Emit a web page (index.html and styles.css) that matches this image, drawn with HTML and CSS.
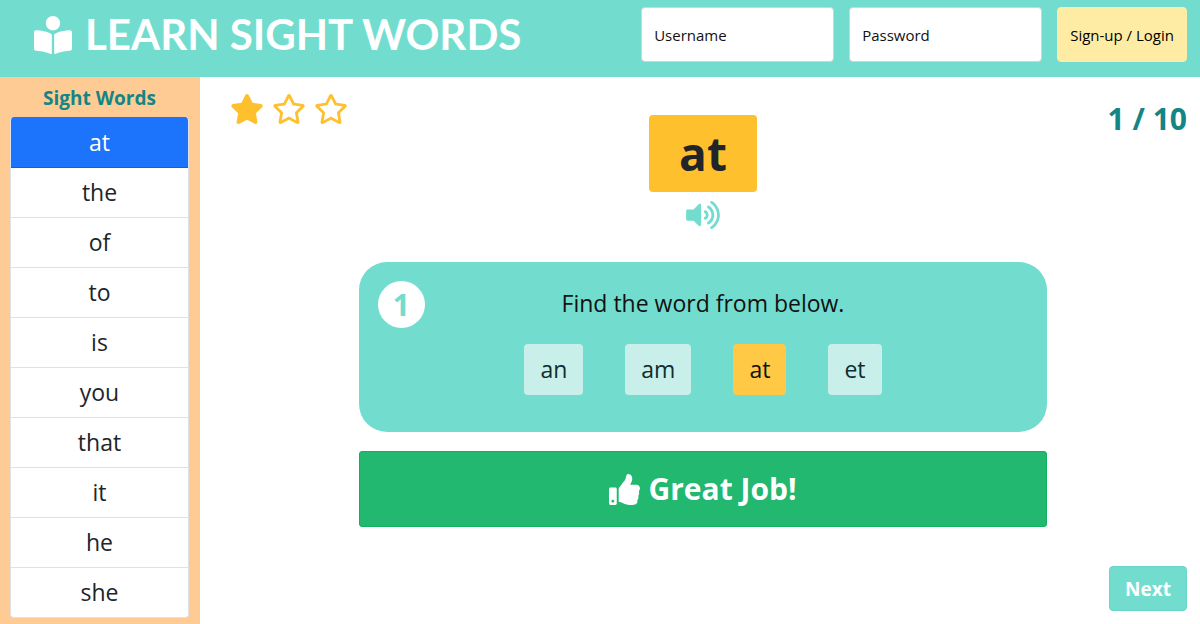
FILE: index.html
```html
<!DOCTYPE html>
<html lang="en">
<head>
<meta charset="utf-8">
<meta name="viewport" content="width=device-width, initial-scale=1">
<title>Learn Sight Words</title>
<link rel="stylesheet" href="styles.css">
</head>
<body class="page">
<svg class="sprite" aria-hidden="true">
  <symbol id="star-outline" viewBox="0 0 576 512"><path d="M528.1 171.5L382 150.2 316.7 17.8c-11.7-23.6-45.6-23.9-57.4 0L194 150.2 47.9 171.5c-26.2 3.8-36.7 36.1-17.7 54.6l105.7 103-25 145.5c-4.5 26.3 23.2 46 46.4 33.7L288 439.6l130.7 68.7c23.2 12.2 50.9-7.4 46.4-33.7l-25-145.5 105.7-103c19-18.5 8.5-50.8-17.7-54.6zM388.6 312.3l23.7 138.4L288 385.4l-124.3 65.3 23.7-138.4-100.6-98 139-20.2 62.2-126 62.2 126 139 20.2-100.6 98z"/></symbol>
  <symbol id="star-solid" viewBox="0 0 576 512"><path d="M259.3 17.8L194 150.2 47.9 171.5c-26.2 3.8-36.7 36.1-17.7 54.6l105.7 103-25 145.5c-4.5 26.3 23.2 46 46.4 33.7L288 439.6l130.7 68.7c23.2 12.2 50.9-7.4 46.4-33.7l-25-145.5 105.7-103c19-18.5 8.5-50.8-17.7-54.6L382 150.2 316.7 17.8c-11.7-23.6-45.6-23.9-57.4 0z"/></symbol>
</svg>
<header class="topbar">
  <h1 class="brand">
    <svg class="brand-icon" viewBox="0 0 512 512" aria-hidden="true"><path d="M352 96c0-53.02-42.98-96-96-96s-96 42.98-96 96 42.98 96 96 96 96-42.98 96-96zM233.59 241.1c-59.33-36.32-155.43-46.3-203.79-49.05C13.55 191.13 0 203.51 0 219.14v222.8c0 14.33 11.59 26.28 26.49 27.05 43.66 2.29 131.99 10.68 193.04 41.43 9.37 4.72 20.48-1.71 20.48-11.87V252.56c-.01-4.67-2.32-8.95-6.42-11.46zm248.61-49.05c-48.35 2.74-144.46 12.73-203.78 49.05-4.1 2.51-6.41 6.96-6.41 11.63v245.79c0 10.19 11.14 16.63 20.54 11.9 61.04-30.72 149.32-39.11 192.97-41.4 14.9-.78 26.49-12.73 26.49-27.06V219.14c-.01-15.63-13.56-28.01-29.81-27.09z"/></svg>
    <span>LEARN SIGHT WORDS</span>
  </h1>
  <form class="login">
    <input class="field" type="text" placeholder="Username" aria-label="Username">
    <input class="field" type="password" placeholder="Password" aria-label="Password">
    <button class="login-button" type="button">Sign-up / Login</button>
  </form>
</header>
<div class="layout">
  <nav class="sidebar" aria-labelledby="words-title">
    <h2 class="sidebar-title" id="words-title">Sight Words</h2>
    <div class="words">
      <a class="word active" href="#at">at</a>
      <a class="word" href="#the">the</a>
      <a class="word" href="#of">of</a>
      <a class="word" href="#to">to</a>
      <a class="word" href="#is">is</a>
      <a class="word" href="#you">you</a>
      <a class="word" href="#that">that</a>
      <a class="word" href="#it">it</a>
      <a class="word" href="#he">he</a>
      <a class="word" href="#she">she</a>
    </div>
  </nav>
  <main class="stage">
    <div class="stars" role="img" aria-label="1 of 3 stars">
      <svg class="star"><use href="#star-solid"/></svg>
      <svg class="star"><use href="#star-outline"/></svg>
      <svg class="star"><use href="#star-outline"/></svg>
    </div>
    <div class="lesson">
      <div class="current-word">at</div>
      <button class="listen" type="button" aria-label="Listen">
        <svg class="listen-icon" viewBox="0 0 576 512" aria-hidden="true"><path d="M215.03 71.05L126.06 160H24c-13.26 0-24 10.74-24 24v144c0 13.25 10.74 24 24 24h102.06l88.97 88.95c15.03 15.03 40.97 4.47 40.97-16.97V88.02c0-21.46-25.96-31.98-40.97-16.97zm233.32-51.08c-11.17-7.33-26.18-4.24-33.51 6.95-7.34 11.17-4.22 26.18 6.95 33.51 66.27 43.49 105.82 116.6 105.82 195.58 0 78.98-39.55 152.09-105.82 195.58-11.17 7.32-14.29 22.34-6.95 33.5 7.04 10.71 21.93 14.56 33.51 6.95C528.27 439.58 576 351.33 576 256S528.27 72.43 448.35 19.97zM480 256c0-63.53-32.06-121.94-85.77-156.24-11.19-7.14-26.03-3.82-33.12 7.46s-3.78 26.21 7.41 33.36C408.27 165.97 432 209.6 432 256s-23.73 90.02-63.48 115.42c-11.19 7.14-14.5 22.07-7.41 33.36 6.51 10.36 21.12 15.14 33.12 7.46C447.94 377.94 480 319.54 480 256zm-141.77-76.87c-11.58-6.33-26.19-2.16-32.61 9.45-6.39 11.61-2.16 26.2 9.45 32.61C327.98 228.28 336 241.63 336 256c0 14.38-8.02 27.72-20.92 34.81-11.61 6.41-15.84 21-9.45 32.61 6.43 11.66 21.05 15.8 32.61 9.45 28.23-15.55 45.77-45 45.77-76.88s-17.54-61.32-45.78-76.86z"/></svg>
      </button>
      <section class="question">
        <span class="step">1</span>
        <p class="prompt">Find the word from below.</p>
        <div class="options">
          <button class="option" type="button">an</button>
          <button class="option" type="button">am</button>
          <button class="option chosen" type="button">at</button>
          <button class="option" type="button">et</button>
        </div>
      </section>
      <div class="result" role="status">
        <svg class="result-icon" viewBox="0 0 512 512" aria-hidden="true"><path d="M104 224H24c-13.255 0-24 10.745-24 24v240c0 13.255 10.745 24 24 24h80c13.255 0 24-10.745 24-24V248c0-13.255-10.745-24-24-24zM64 472c-13.255 0-24-10.745-24-24s10.745-24 24-24 24 10.745 24 24-10.745 24-24 24zM384 81.452c0 42.416-25.97 66.208-33.277 94.548h101.723c33.397 0 59.397 27.746 59.553 58.098.084 17.938-7.546 37.249-19.439 49.197l-.11.11c9.836 23.337 8.237 56.037-9.308 79.469 8.681 25.895-.069 57.704-16.382 74.757 4.298 17.598 2.244 32.575-6.148 44.632C440.202 511.587 389.616 512 346.839 512l-2.845-.001c-48.287-.017-87.806-17.598-119.56-31.725-15.957-7.099-36.821-15.887-52.651-16.178-6.54-.12-11.783-5.457-11.783-11.998v-213.77c0-3.2 1.282-6.271 3.558-8.521 39.614-39.144 56.648-80.587 89.117-113.111 14.804-14.832 20.188-37.236 25.393-58.902C282.515 39.293 291.817 0 312 0c24 0 72 8 72 81.452z"/></svg>
        <span>Great Job!</span>
      </div>
    </div>
    <div class="progress">
      <span class="count">1 / 10</span>
      <button class="next" type="button">Next</button>
    </div>
  </main>
</div>
</body>
</html>
```
FILE: styles.css
```css
* {
  box-sizing: border-box;
}

.page {
  display: flex;
  flex-direction: column;
  min-height: 100vh;
  margin: 0;
  background: #fff;
  color: #212529;
  font-family: "Open Sans", "Noto Sans", sans-serif;
  font-size: 16px;
}

button,
input {
  font-family: inherit;
}

.sprite {
  display: none;
}

.topbar {
  display: flex;
  justify-content: space-between;
  align-items: flex-start;
  padding: 7px 13px 15px 34px;
  background: #72ddcf;
}

.brand {
  display: flex;
  align-items: center;
  gap: 13px;
  margin: 0;
  color: #fff;
  font-family: Lato, sans-serif;
  font-size: 42px;
  font-weight: 700;
  line-height: 55px;
  white-space: nowrap;
}

.brand-icon {
  width: 38px;
  height: 38px;
  fill: #fff;
}

.login {
  display: flex;
  gap: 15px;
}

.field,
.login-button {
  height: 55px;
  padding: 0 12px;
  border: 1px solid #ced4da;
  border-radius: 4px;
  font-size: 15px;
}

.field {
  width: 193px;
  background: #fff;
  color: #000;
}

.field::placeholder {
  color: #111;
  opacity: 1;
}

.login-button {
  border-color: #feeca4;
  background: #feeca4;
  color: #000;
}

.layout {
  display: flex;
  flex: 1;
}

.sidebar {
  width: 200px;
  padding: 9px 11px 6px 10px;
  background: #ffcb94;
}

.sidebar-title {
  margin: 0 0 7px;
  color: #138585;
  font-size: 19px;
  font-weight: 700;
  line-height: 24px;
  text-align: center;
}

.words {
  overflow: hidden;
  border: 1px solid #dfe1e5;
  border-top: 0;
  border-radius: 4px;
  background: #fff;
}

.word {
  display: block;
  border-bottom: 1px solid #dfe1e5;
  color: #212529;
  font-size: 23px;
  line-height: 49px;
  text-align: center;
  text-decoration: none;
}

.word:last-child {
  border-bottom: 0;
}

.word.active {
  padding-top: 1px;
  border-color: #0d5cf5;
  background: #1b74fb;
  color: #fff;
}

.stage {
  display: grid;
  flex: 1;
  grid-template-columns: minmax(0, 14fr) minmax(0, 69fr) minmax(0, 14fr);
  padding: 17px 13px 13px 19px;
}

.stars {
  display: flex;
  gap: 8px;
  padding-left: 11px;
}

.star {
  width: 34px;
  height: 30px;
  flex: none;
  fill: #ffc02d;
}

.lesson {
  display: flex;
  flex-direction: column;
  align-items: center;
  padding-top: 21px;
}

.current-word {
  padding: 0 30px;
  border-radius: 4px;
  background: #ffc02d;
  font-size: 46px;
  font-weight: 700;
  line-height: 77px;
}

.listen {
  display: flex;
  margin: 8px 0 32px;
  padding: 0;
  border: 0;
  background: none;
}

.listen-icon {
  width: 34px;
  height: 30px;
  fill: #72ddcf;
}

.question {
  display: grid;
  grid-template-columns: 47px 1fr 47px;
  row-gap: 16px;
  width: 100%;
  padding: 19px 19px 37px;
  border-radius: 28px;
  background: #72ddcf;
  color: #111;
}

.step {
  border-radius: 50%;
  background: #fff;
  color: #72ddcf;
  font-size: 30px;
  font-weight: 700;
  line-height: 47px;
  text-align: center;
}

.prompt {
  margin: 0;
  font-size: 23px;
  line-height: 45px;
  text-align: center;
}

.options {
  display: flex;
  grid-column: 1 / -1;
  justify-content: center;
  gap: 42px;
}

.option {
  height: 51px;
  padding: 0 16px 2px;
  border: 0;
  border-radius: 4px;
  background: #c9efea;
  color: #122d2e;
  font-size: 23px;
}

.option.chosen {
  background: #ffc845;
  color: #111;
}

.result {
  display: flex;
  justify-content: center;
  align-items: center;
  gap: 8px;
  width: 100%;
  margin-top: 19px;
  border: 1px solid #10b05c;
  border-radius: 3px;
  background: #22b86f;
  color: #fff;
  font-size: 30px;
  font-weight: 700;
  line-height: 74px;
}

.result-icon {
  width: 31px;
  height: 31px;
  fill: #fff;
}

.progress {
  display: flex;
  flex-direction: column;
  justify-content: space-between;
  align-items: flex-end;
  padding-top: 5px;
}

.count {
  color: #138585;
  font-size: 30px;
  font-weight: 700;
  line-height: 40px;
}

.next {
  height: 45px;
  padding: 0 15px;
  border: 1px solid #67d6c9;
  border-radius: 4px;
  background: #72ddcf;
  color: #fff;
  font-size: 19px;
  font-weight: 700;
}
```
